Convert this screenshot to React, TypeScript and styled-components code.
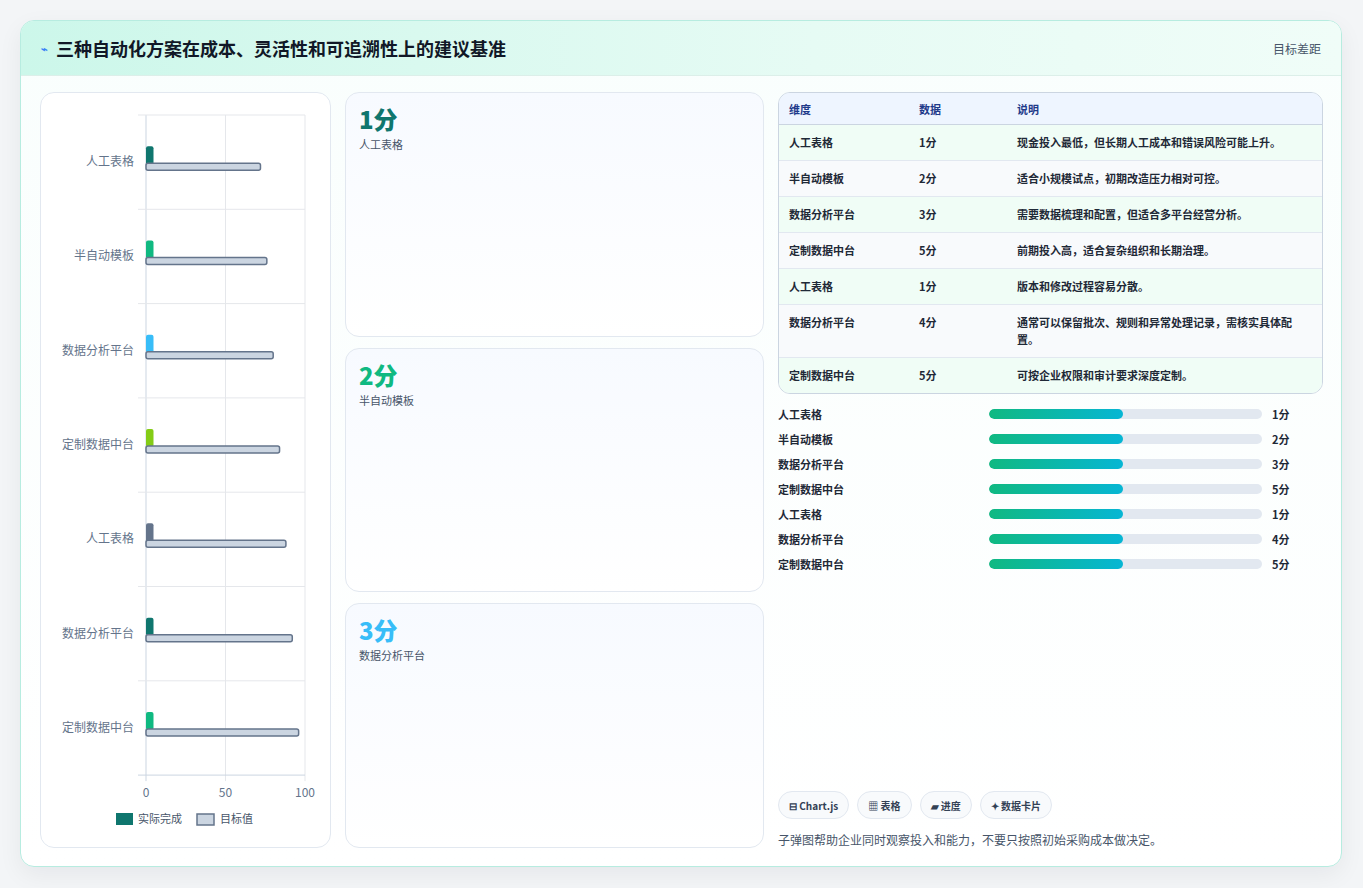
import React from "react";
import styled, { createGlobalStyle } from "styled-components";

const Global = createGlobalStyle`
  html, body { margin: 0; padding: 0; background: #f3f5f7; }
  body { font-family: "Noto Sans CJK SC", "Noto Sans", sans-serif; }
  * { box-sizing: border-box; }
`;

const Page = styled.div`
  padding: 20px 21px 21px 20px;
`;
const Frame = styled.div`
  height: 847px;
  border: 1px solid #b7ece0;
  border-radius: 14px;
  background: linear-gradient(180deg, #f9fefd 0%, #ffffff 100%);
  box-shadow: 0 8px 24px rgba(15, 23, 42, 0.06);
  display: flex;
  flex-direction: column;
  overflow: hidden;
`;
const Header = styled.div`
  height: 55px;
  flex: none;
  display: flex;
  align-items: center;
  justify-content: space-between;
  padding: 0 20px 0 20px;
  background: linear-gradient(90deg, #ccf7ea 0%, #e6fbf4 60%, #f0fdf8 100%);
  border-bottom: 1px solid #dcefe9;
`;
const Title = styled.h1`
  margin: 0;
  font-size: 18px;
  font-weight: 700;
  color: #111827;
  display: flex;
  align-items: center;
  gap: 8px;
`;
const Bolt = styled.span`
  color: #3b82f6;
  font-size: 11px;
`;
const HeadRight = styled.span`
  font-size: 12px;
  color: #475569;
`;
const Body = styled.div`
  flex: 1;
  display: grid;
  grid-template-columns: 291px 419px 1fr;
  gap: 14px;
  padding: 16px 18px 18px 19px;
  min-height: 0;
`;
const Panel = styled.div`
  border: 1px solid #e2e8f0;
  border-radius: 14px;
  background: #fff;
`;
const Cards = styled.div`
  display: grid;
  grid-template-rows: 1fr 1fr 1fr;
  gap: 11px;
`;
const Card = styled.div`
  border: 1px solid #e2e8f0;
  border-radius: 14px;
  background: linear-gradient(180deg, #f7faff 0%, #ffffff 100%);
  padding: 10px 13px;
`;
const Big = styled.div<{ $c: string }>`
  font-size: 24px;
  font-weight: 800;
  color: ${(p) => p.$c};
  line-height: 32px;
`;
const Sub = styled.div`
  font-size: 11px;
  color: #475569;
  margin-top: 1px;
`;
const Right = styled.div`
  display: flex;
  flex-direction: column;
  min-width: 0;
`;
const Table = styled.table`
  width: 100%;
  border-collapse: separate;
  border-spacing: 0;
  border: 1px solid #cbd5e1;
  border-radius: 12px;
  overflow: hidden;
  font-size: 11px;
  font-weight: 600;
  color: #1f2937;
`;
const Th = styled.th<{ $w?: string }>`
  text-align: left;
  background: #eef5ff;
  color: #1e3a8a;
  padding: 0 10px;
  height: 32px;
  width: ${(p) => p.$w || "auto"};
  border-bottom: 1px solid #cbd5e1;
`;
const Tr = styled.tr<{ $alt: boolean }>`
  background: ${(p) => (p.$alt ? "#f8fafc" : "#f0fdf6")};
`;
const Td = styled.td<{ $last: boolean }>`
  padding: 9px 10px;
  line-height: 17px;
  vertical-align: top;
  border-bottom: ${(p) => (p.$last ? "none" : "1px solid #e2e8f0")};
`;
const Bars = styled.div`
  margin-top: 11px;
  display: flex;
  flex-direction: column;
  gap: 7px;
`;
const BarRow = styled.div`
  display: grid;
  grid-template-columns: 201px 273px 1fr;
  align-items: center;
  column-gap: 10px;
  font-size: 11px;
  font-weight: 600;
  color: #1f2937;
  height: 18px;
`;
const Track = styled.div`
  height: 10px;
  border-radius: 5px;
  background: #e2e8f0;
  overflow: hidden;
`;
const Fill = styled.div`
  height: 100%;
  border-radius: 5px;
  background: linear-gradient(90deg, #10b981, #06b6d4);
`;
const Spacer = styled.div`
  flex: 1;
`;
const Chips = styled.div`
  display: flex;
  gap: 8px;
`;
const Chip = styled.span`
  height: 28px;
  padding: 0 10px;
  border: 1px solid #e2e8f0;
  border-radius: 14px;
  background: #f8fafc;
  font-size: 10px;
  font-weight: 700;
  color: #334155;
  display: inline-flex;
  align-items: center;
  gap: 3px;
`;
const Note = styled.p`
  margin: 12px 0 0;
  font-size: 12px;
  color: #475569;
`;

const cats = ["人工表格", "半自动模板", "数据分析平台", "定制数据中台", "人工表格", "数据分析平台", "定制数据中台"];
const cols = ["#0f766e", "#10b981", "#38bdf8", "#84cc16", "#64748b", "#0f766e", "#10b981"];
const targets = [72, 76, 80, 84, 88, 92, 96];

function Chart() {
  const x0 = 105, x1 = 264, y0 = 22, step = 94.3;
  const sx = (v: number) => x0 + ((x1 - x0) * v) / 100;
  return (
    <svg width="289" height="754" viewBox="0 0 289 754" style={{ display: "block" }}>
      {[0, 50, 100].map((v) => (
        <line key={v} x1={sx(v)} x2={sx(v)} y1={y0} y2={y0 + step * 7 + 6} stroke={v === 0 ? "#cbd5e1" : "#e5e7eb"} />
      ))}
      {Array.from({ length: 8 }).map((_, i) => (
        <line key={i} x1={x0 - 8} x2={x1} y1={y0 + step * i} y2={y0 + step * i} stroke={i === 7 ? "#cbd5e1" : "#e5e7eb"} />
      ))}
      {cats.map((c, i) => {
        const cy = y0 + step * i + step / 2;
        return (
          <g key={i}>
            <text x={x0 - 12} y={cy + 4} textAnchor="end" fontSize="12" fill="#64748b">{c}</text>
            <rect x={x0} y={cy - 16} width={7.5} height={18} rx={2} fill={cols[i]} />
            <rect x={x0} y={cy + 1} width={sx(targets[i]) - x0} height={7} rx={2} fill="#cbd5e1" stroke="#64748b" strokeWidth="1.5" />
          </g>
        );
      })}
      {[0, 50, 100].map((v) => (
        <text key={v} x={sx(v)} y={y0 + step * 7 + 22} textAnchor="middle" fontSize="12" fill="#64748b">{v}</text>
      ))}
      <rect x={75} y={720} width={17} height={12} fill="#0f766e" />
      <text x={97} y={730} fontSize="11" fill="#475569">实际完成</text>
      <rect x={156} y={721} width={17} height={11} fill="#cbd5e1" stroke="#64748b" strokeWidth="1.5" />
      <text x={179} y={730} fontSize="11" fill="#475569">目标值</text>
    </svg>
  );
}

const rows = [
  ["人工表格", "1分", "现金投入最低，但长期人工成本和错误风险可能上升。"],
  ["半自动模板", "2分", "适合小规模试点，初期改造压力相对可控。"],
  ["数据分析平台", "3分", "需要数据梳理和配置，但适合多平台经营分析。"],
  ["定制数据中台", "5分", "前期投入高，适合复杂组织和长期治理。"],
  ["人工表格", "1分", "版本和修改过程容易分散。"],
  ["数据分析平台", "4分", "通常可以保留批次、规则和异常处理记录，需核实具体配置。"],
  ["定制数据中台", "5分", "可按企业权限和审计要求深度定制。"],
];

export default function App() {
  return (
    <Page>
      <Global />
      <Frame>
        <Header>
          <Title><Bolt>⌁</Bolt>三种自动化方案在成本、灵活性和可追溯性上的建议基准</Title>
          <HeadRight>目标差距</HeadRight>
        </Header>
        <Body>
          <Panel><Chart /></Panel>
          <Cards>
            <Card><Big $c="#0f766e">1分</Big><Sub>人工表格</Sub></Card>
            <Card><Big $c="#10b981">2分</Big><Sub>半自动模板</Sub></Card>
            <Card><Big $c="#38bdf8">3分</Big><Sub>数据分析平台</Sub></Card>
          </Cards>
          <Right>
            <Table>
              <thead>
                <tr><Th $w="130px">维度</Th><Th $w="98px">数据</Th><Th>说明</Th></tr>
              </thead>
              <tbody>
                {rows.map((r, i) => (
                  <Tr key={i} $alt={i % 2 === 1}>
                    {r.map((c, j) => <Td key={j} $last={i === rows.length - 1}>{c}</Td>)}
                  </Tr>
                ))}
              </tbody>
            </Table>
            <Bars>
              {rows.map((r, i) => (
                <BarRow key={i}>
                  <span>{r[0]}</span>
                  <Track><Fill style={{ width: "49%" }} /></Track>
                  <span>{r[1]}</span>
                </BarRow>
              ))}
            </Bars>
            <Spacer />
            <Chips>
              <Chip>⊟ Chart.js</Chip>
              <Chip>▦ 表格</Chip>
              <Chip>▰ 进度</Chip>
              <Chip>✦ 数据卡片</Chip>
            </Chips>
            <Note>子弹图帮助企业同时观察投入和能力，不要只按照初始采购成本做决定。</Note>
          </Right>
        </Body>
      </Frame>
    </Page>
  );
}
